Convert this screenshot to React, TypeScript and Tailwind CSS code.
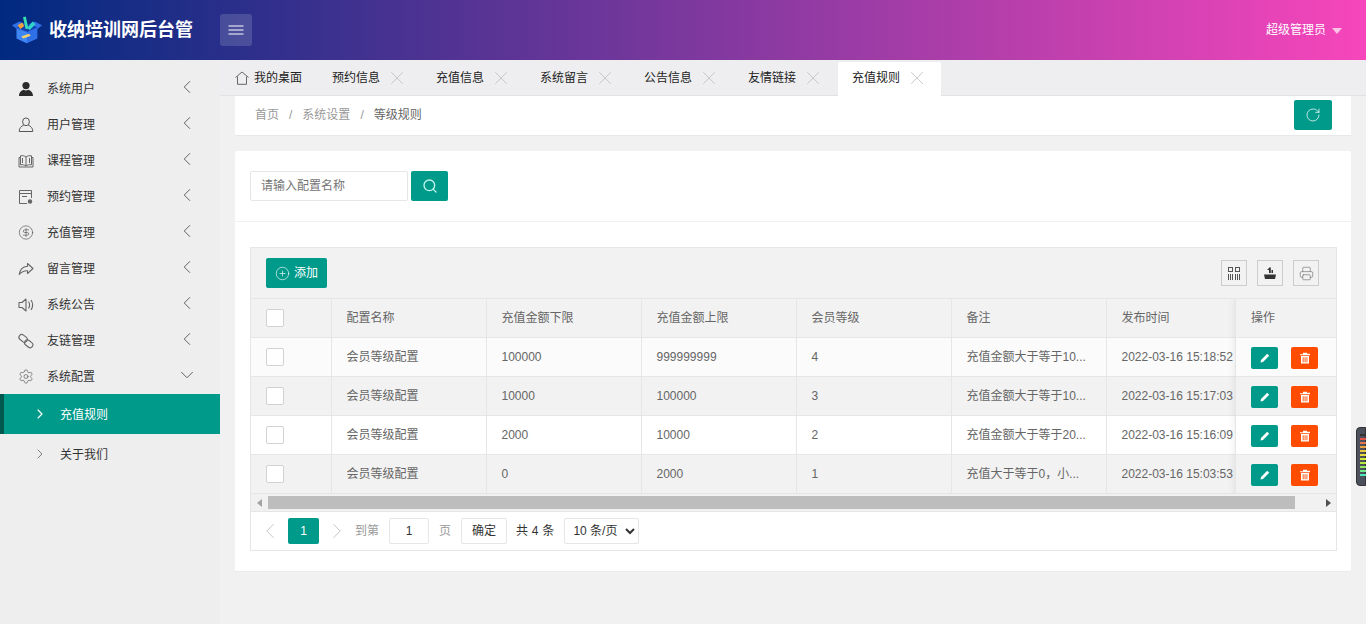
import {
  ChevronDown,
  ChevronLeft,
  ChevronRight,
  CircleDollarSign,
  CirclePlus,
  Printer,
  RotateCw,
  Search,
  Settings,
  X,
} from "lucide-react";
import type { ReactNode } from "react";

const FilledUser = () => (
  <svg viewBox="0 0 16 16" className="w-4 h-4" fill="#2b2b2b">
    <circle cx="8" cy="4.6" r="3.6" />
    <path d="M1 15c0-3.600 2.600-5.600 4.600-6.200 1.400.9 3.400.9 4.800 0C12.400 9.400 15 11.400 15 15z" />
  </svg>
);

const OutlineUser = () => (
  <svg viewBox="0 0 16 16" className="w-4 h-4" fill="none" stroke="#555" strokeWidth="1">
    <ellipse cx="8" cy="4.800" rx="3.400" ry="3.900" />
    <path d="M5.600 8.300C3 9.200 1.200 11.300 1.200 14.500h13.600c0-3.200-1.800-5.300-4.400-6.200" />
  </svg>
);

const Book = () => (
  <svg viewBox="0 0 16 16" className="w-4 h-4" fill="none" stroke="#666" strokeWidth="1">
    <path d="M8 4C6.500 2.800 4.500 2.500 2.500 2.800v9C4.500 11.500 6.500 11.800 8 13c1.500-1.200 3.500-1.500 5.500-1.200v-9C11.500 2.500 9.500 2.800 8 4zM8 4v9" />
    <path d="M2.500 4.500H1V14h14V4.500h-1.500" />
    <path d="M4.500 5v5M11.500 5v5" />
  </svg>
);

const Booking = () => (
  <svg viewBox="0 0 16 16" className="w-4 h-4" fill="none" stroke="#666" strokeWidth="1">
    <path d="M13.500 9V1.500h-12v13H9" />
    <path d="M1.500 4.500h12M4 7.500h5" />
    <circle cx="12" cy="12.500" r="2.200" fill="#666" stroke="none" />
  </svg>
);

const Share = () => (
  <svg viewBox="0 0 16 16" className="w-4 h-4" fill="none" stroke="#666" strokeWidth="1.100" strokeLinejoin="round">
    <path d="M9.500 2.500l5.500 5-5.500 5V9.800C6 9.600 3.500 10.800 1.200 13.500 1.800 8.800 4.800 5.600 9.500 5.200z" />
  </svg>
);

const Speaker = () => (
  <svg viewBox="0 0 16 16" className="w-4 h-4" fill="none" stroke="#666" strokeWidth="1.100" strokeLinejoin="round">
    <path d="M1 5.500h3L8 2v12l-4-3.500H1z" />
    <path d="M10.500 4.500c1.300 2 1.300 5 0 7M13 3c2 3 2 7 0 10" />
  </svg>
);

const Chain = () => (
  <svg viewBox="0 0 16 16" className="w-4 h-4" fill="none" stroke="#666" strokeWidth="1.100">
    <rect x="0.800" y="2.400" width="9" height="5.600" rx="2.800" transform="rotate(38 5 5)" />
    <rect x="6.200" y="8" width="9" height="5.600" rx="2.800" transform="rotate(38 10.700 10.800)" />
  </svg>
);

const HomeIcon = () => (
  <svg viewBox="0 0 14 14" className="w-[14px] h-[14px]" fill="none" stroke="#666" strokeWidth="1">
    <path d="M.5 6.500L7 1l6.500 5.500M2.500 5.500v7.800h9V5.500" />
  </svg>
);

const Hamburger = () => (
  <svg viewBox="0 0 16 10" className="w-4 h-[10px]" stroke="#fff" strokeWidth="1">
    <path d="M.5 1h15M.5 5h15M.5 9h15" />
  </svg>
);

const Logo = () => (
  <svg viewBox="0 0 34 30" className="w-[32px] h-[30px]">
    <path d="M1 10l8-4 8 4 8-4 8 4-5 4v10l-11 5-11-5V14z" fill="#2f6fe8" />
    <path d="M6 12l11-4 11 4-11 5z" fill="#123fae" />
    <path d="M17 17v12l-11-5V14z" fill="#3f86f5" />
    <path d="M7 10l5-3 2 4-4 3z" fill="#f0a13c" />
    <rect x="14" y="1" width="3" height="13" fill="#39e0b4" transform="rotate(-12 15 7)" />
    <path d="M17 13l6-7 3 3-6 6z" fill="#2fd3c8" />
    <path d="M11 22l8-3 2 2-8 3z" fill="#f6d36b" />
  </svg>
);

const Pencil = () => (
  <svg viewBox="0 0 12 12" className="w-3 h-3" fill="#fff">
    <path d="M1.500 10.500l.5-2.500L8.200 1.800l2 2L4 10z" />
  </svg>
);

const Trash = () => (
  <svg viewBox="0 0 12 12" className="w-3 h-3" fill="#fff">
    <path d="M4 .8h4v1h3v1.400H1V2.200h3zM2 4h8v7.400H2zm1.700 1.200v5h.9v-5zm1.900 0v5h.9v-5zm1.900 0v5h.9v-5z" fillRule="evenodd" />
  </svg>
);

const ColsIcon = () => (
  <svg viewBox="0 0 14 14" className="w-[14px] h-[14px]" fill="none" stroke="#555" strokeWidth="1">
    <rect x="1.500" y="1.500" width="4" height="4" />
    <rect x="8.500" y="1.500" width="4" height="4" />
    <path d="M1.500 8v6M3.500 8v6M5.500 8v6M8.500 8v6M10.500 8v6M12.500 8v6" />
  </svg>
);

const ExportIcon = () => (
  <svg viewBox="0 0 14 14" className="w-[14px] h-[14px]" fill="#333">
    <path d="M1 8.500h12l-1 4.500H2z" />
    <path d="M6 7V4H4l3-3 .8.800V7zM8.500 4H10v3H8.500z" />
  </svg>
);

const menus: { icon: ReactNode; label: string }[] = [
  { icon: <FilledUser />, label: "系统用户" },
  { icon: <OutlineUser />, label: "用户管理" },
  { icon: <Book />, label: "课程管理" },
  { icon: <Booking />, label: "预约管理" },
  { icon: <CircleDollarSign size={17} strokeWidth={1} color="#555" />, label: "充值管理" },
  { icon: <Share />, label: "留言管理" },
  { icon: <Speaker />, label: "系统公告" },
  { icon: <Chain />, label: "友链管理" },
];

const tabs = ["预约信息", "充值信息", "系统留言", "公告信息", "友情链接"];

const columns = ["配置名称", "充值金额下限", "充值金额上限", "会员等级", "备注", "发布时间"];

const rows = [
  ["会员等级配置", "100000", "999999999", "4", "充值金额大于等于10...", "2022-03-16 15:18:52"],
  ["会员等级配置", "10000", "100000", "3", "充值金额大于等于10...", "2022-03-16 15:17:03"],
  ["会员等级配置", "2000", "10000", "2", "充值金额大于等于20...", "2022-03-16 15:16:09"],
  ["会员等级配置", "0", "2000", "1", "充值大于等于0，小...", "2022-03-16 15:03:53"],
];

const rowBg = ["bg-[#fbfbfb]", "bg-[#f2f2f2]", "bg-white", "bg-[#f2f2f2]"];

const Checkbox = () => (
  <span className="block w-[18px] h-[18px] bg-white border border-[#d2d2d2] rounded-[2px]" />
);

export default function App() {
  return (
    <div className="relative w-full h-[624px] overflow-hidden bg-[#f1f1f1] text-xs text-[#666] [font-family:'Liberation_Sans','Noto_Sans_CJK_SC',sans-serif]">
      {/* Header */}
      <header className="flex items-center h-[60px] bg-linear-to-r/srgb from-[#002a80] to-[#f746bb] text-white">
        <div className="flex items-center w-[220px] pl-[11px] gap-[6px]">
          <Logo />
          <span className="text-lg font-bold whitespace-nowrap">收纳培训网后台管</span>
        </div>
        <button className="flex items-center justify-center w-8 h-8 rounded-[3px] bg-white/15">
          <Hamburger />
        </button>
        <div className="ml-auto flex items-center pr-6">
          <span>超级管理员</span>
          <span className="ml-[6px] mt-[2px] w-0 h-0 border-x-[5px] border-x-transparent border-t-[6px] border-t-[#fbc4e6]" />
        </div>
      </header>

      <div className="flex h-[564px]">
        {/* Sidebar */}
        <aside className="w-[220px] shrink-0 bg-[#eeeeee] pt-[10px] text-[#333]">
          {menus.map((m) => (
            <div key={m.label} className="flex items-center h-9 pl-[18px] pr-[22px]">
              <span className="flex justify-center w-4 mr-[13px] mt-[1px]">{m.icon}</span>
              <span className="pt-[2px]">{m.label}</span>
              <ChevronLeft size={22} strokeWidth={1} color="#555" className="ml-auto -mt-[2px]" />
            </div>
          ))}
          <div className="flex items-center h-9 pl-[18px] pr-[22px]">
            <span className="flex justify-center w-4 mr-[13px] mt-[1px]">
              <Settings size={17} strokeWidth={1} color="#555" />
            </span>
            <span className="pt-[2px]">系统配置</span>
            <ChevronDown size={22} strokeWidth={1} color="#555" className="ml-auto -mt-[2px]" />
          </div>
          <div className="flex items-center h-10 pl-[28px] bg-[#009a8a] border-l-4 border-l-[#00584f] text-white">
            <ChevronRight size={16} strokeWidth={1.6} color="#fff" className="mr-[12px]" />
            <span className="pt-[2px]">充值规则</span>
          </div>
          <div className="flex items-center h-10 pl-[32px]">
            <ChevronRight size={16} strokeWidth={1.1} color="#555" className="mr-[12px]" />
            <span className="pt-[2px]">关于我们</span>
          </div>
        </aside>

        <main className="flex-1 min-w-0">
          {/* Tabs */}
          <div className="flex h-9 bg-[#eeeef0] border-b border-[#e2e2e2] text-[#222]">
            <div className="flex items-center w-[98px] pl-[15px] gap-[5px]">
              <HomeIcon />
              <span>我的桌面</span>
            </div>
            {tabs.map((t) => (
              <div key={t} className="flex items-center w-[104px] pl-[14px]">
                <span>{t}</span>
                <X size={22} strokeWidth={1} color="#c4c4c4" className="ml-[6px]" />
              </div>
            ))}
            <div className="flex items-center w-[103px] h-[34px] mt-[2px] pb-[3px] pl-[14px] bg-white rounded-t-[2px]">
              <span>充值规则</span>
              <X size={22} strokeWidth={1} color="#c4c4c4" className="ml-[6px]" />
            </div>
          </div>

          <div className="px-[15px]">
            {/* Breadcrumb */}
            <div className="flex items-center h-10 pb-[1px] pl-5 pr-[19px] bg-white border-b border-[#e8e8e8]">
              <span className="text-[#999]">首页</span>
              <span className="mx-[10px] text-[#999]">/</span>
              <span className="text-[#999]">系统设置</span>
              <span className="mx-[10px] text-[#999]">/</span>
              <span>等级规则</span>
              <button className="ml-auto flex items-center justify-center w-[38px] h-[30px] bg-[#009a8a] rounded-[2px]">
                <RotateCw size={16} strokeWidth={1.1} color="#fff" />
              </button>
            </div>

            {/* Card */}
            <div className="mt-[15px] h-[421px] bg-white rounded-[2px] border-b border-[#ebebeb]">
              <div className="flex items-center h-[71px] px-[15px] border-b border-[#f0f0f0]">
                <input
                  placeholder="请输入配置名称"
                  className="w-[158px] h-[30px] px-[10px] border border-[#e6e6e6] rounded-[2px] outline-none placeholder:text-[#757575]"
                />
                <button className="flex items-center justify-center ml-[3px] w-[37px] h-[30px] bg-[#009a8a] rounded-[2px]">
                  <Search size={16} strokeWidth={2} color="#bff5ec" />
                </button>
              </div>

              <div className="ml-[15px] mr-[14px] mt-[25px] border border-[#e6e6e6]">
                {/* Toolbar */}
                <div className="flex items-center h-[51px] pl-[15px] pr-[17px] bg-[#f2f2f2] border-b border-[#e6e6e6]">
                  <button className="flex items-center justify-center gap-1 w-[61px] h-[30px] bg-[#009a8a] rounded-[2px] text-white">
                    <CirclePlus size={15} strokeWidth={1} color="#fff" />
                    添加
                  </button>
                  <div className="ml-auto flex gap-[10px]">
                    <span className="flex items-center justify-center w-[26px] h-[26px] border border-[#ccc]">
                      <ColsIcon />
                    </span>
                    <span className="flex items-center justify-center w-[26px] h-[26px] border border-[#ccc]">
                      <ExportIcon />
                    </span>
                    <span className="flex items-center justify-center w-[26px] h-[26px] border border-[#ccc]">
                      <Printer size={15} strokeWidth={1.1} color="#777" />
                    </span>
                  </div>
                </div>

                {/* Table */}
                <div className="relative overflow-hidden">
                  <div className="w-[1240px]">
                    <div className="flex h-[39px] bg-[#f2f2f2] border-b border-[#e6e6e6]">
                      <div className="flex items-center w-[81px] pl-[15px] border-r border-[#e6e6e6]">
                        <Checkbox />
                      </div>
                      {columns.map((c) => (
                        <div key={c} className="flex items-center w-[155px] px-[14.5px] border-r border-[#e6e6e6]">
                          {c}
                        </div>
                      ))}
                    </div>
                    {rows.map((r, i) => (
                      <div key={r[5]} className={`flex h-[39px] border-b border-[#e6e6e6] ${rowBg[i]}`}>
                        <div className="flex items-center w-[81px] pl-[15px] border-r border-[#e6e6e6]">
                          <Checkbox />
                        </div>
                        {r.map((v, j) => (
                          <div key={j} className="flex items-center w-[155px] min-w-0 px-[14.5px] border-r border-[#e6e6e6]">
                            <span className="whitespace-nowrap">{v}</span>
                          </div>
                        ))}
                      </div>
                    ))}
                  </div>

                  {/* Fixed action column */}
                  <div className="absolute top-0 right-0 w-[101px] shadow-[-2px_0_6px_rgba(0,0,0,0.06)] border-l border-[#e6e6e6]">
                    <div className="flex items-center h-[39px] pl-[15px] bg-[#f2f2f2] border-b border-[#e6e6e6]">操作</div>
                    {rows.map((r, i) => (
                      <div key={r[5]} className={`flex items-center h-[39px] pt-[2px] pl-[15px] gap-[13px] border-b border-[#e6e6e6] ${rowBg[i]}`}>
                        <button className="flex items-center justify-center w-[27px] h-[22px] bg-[#009a8a] rounded-[2px]">
                          <Pencil />
                        </button>
                        <button className="flex items-center justify-center w-[27px] h-[22px] bg-[#ff4c00] rounded-[2px]">
                          <Trash />
                        </button>
                      </div>
                    ))}
                  </div>
                </div>

                {/* Scrollbar */}
                <div className="flex items-center h-[17px] bg-[#f1f1f1]">
                  <span className="ml-[6px] w-0 h-0 border-y-4 border-y-transparent border-r-[5px] border-r-[#a3a3a3]" />
                  <span className="ml-[6px] w-[1027px] h-[13px] bg-[#bdbdbd]" />
                  <span className="ml-auto mr-[5px] w-0 h-0 border-y-4 border-y-transparent border-l-[5px] border-l-[#505050]" />
                </div>

                {/* Pagination */}
                <div className="flex items-center h-[39px] border-t border-[#e6e6e6] pl-[6px]">
                  <ChevronLeft size={26} strokeWidth={0.9} color="#c2c2c2" />
                  <span className="flex items-center justify-center ml-[5px] w-[31px] h-[26px] bg-[#009a8a] rounded-[2px] text-white">1</span>
                  <ChevronRight size={26} strokeWidth={0.9} color="#c2c2c2" className="ml-[5px]" />
                  <span className="ml-[5px] text-[#999]">到第</span>
                  <input
                    defaultValue="1"
                    className="ml-[10px] w-10 h-[26px] border border-[#e6e6e6] rounded-[2px] text-center text-[#333] outline-none"
                  />
                  <span className="ml-[10px] text-[#999]">页</span>
                  <button className="ml-[10px] w-[46px] h-[26px] border border-[#e6e6e6] rounded-[2px] text-[#333]">确定</button>
                  <span className="ml-[9px] text-[#333] tracking-[0.2px]">共 4 条</span>
                  <select className="ml-[10px] w-[75px] h-[26px] pl-1 border border-[#e6e6e6] rounded-[2px] bg-white text-[#333] outline-none">
                    <option>10 条/页</option>
                  </select>
                </div>
              </div>
            </div>
          </div>
        </main>
      </div>

      {/* Floating meter stuck on the right edge */}
      <div className="absolute right-0 top-[427px] flex flex-col gap-[2px] w-[10px] h-[59px] pt-[6px] pl-[3px] bg-[#4c505c] rounded-l-[4px] border border-[#333]">
        {["#333", "#e5534b", "#e5734b", "#e9a23b", "#e9c53b", "#e9dd3b", "#d7e93b", "#b5e93b", "#8fe95b", "#6be98b", "#4be9b5"].map((c, i) => (
          <span key={i} className="block h-[2px] w-[6px]" style={{ backgroundColor: c }} />
        ))}
      </div>
    </div>
  );
}
